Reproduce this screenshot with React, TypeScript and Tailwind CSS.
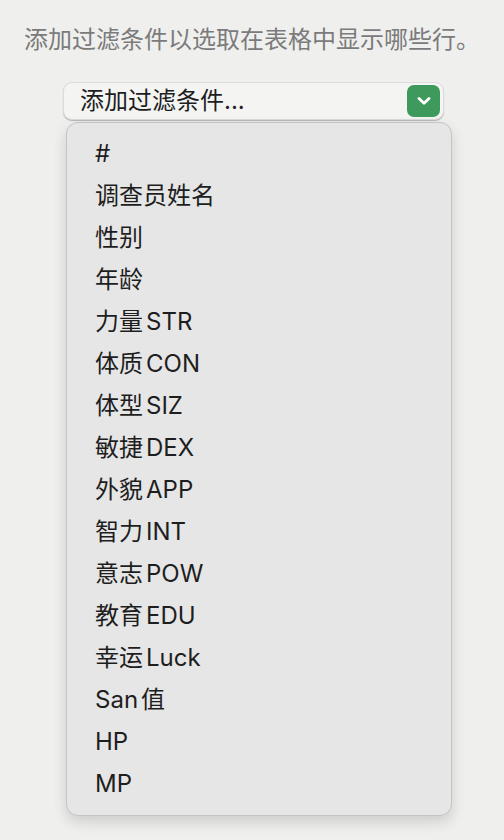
const FIELDS = [
  ['#'],
  ['调查员姓名'],
  ['性别'],
  ['年龄'],
  ['力量', 'STR'],
  ['体质', 'CON'],
  ['体型', 'SIZ'],
  ['敏捷', 'DEX'],
  ['外貌', 'APP'],
  ['智力', 'INT'],
  ['意志', 'POW'],
  ['教育', 'EDU'],
  ['幸运', 'Luck'],
  ['San', '值'],
  ['HP'],
  ['MP'],
];

function Chevron() {
  return (
    <svg width="16" height="12" viewBox="0 0 16 12" fill="none">
      <path d="M3 3.5 L8 8.3 L13 3.5" stroke="white" strokeWidth="2.8" strokeLinecap="round" strokeLinejoin="round" />
    </svg>
  );
}

export default function App() {
  return (
    <div
      className="min-h-screen w-[504px] bg-[#efefee] pt-6"
      style={{ fontFamily: 'Inter, "Noto Sans CJK SC", sans-serif' }}
    >
      <p className="text-center text-[24px] leading-8 text-[#7b7b7b]">添加过滤条件以选取在表格中显示哪些行。</p>

      <div className="mt-[26px] ml-[63px] flex h-[38px] w-[381px] items-center justify-between rounded-[9px] border border-[#dcdcdc] bg-[#f4f4f3] pl-[16px] pr-[3px] shadow-[0_1px_1px_rgba(0,0,0,0.25)]">
        <span className="text-[24px] text-[#1e1e1e]">添加过滤条件...</span>
        <div className="flex h-[32px] w-[33px] items-center justify-center rounded-[7px] bg-[#3e995c]">
          <Chevron />
        </div>
      </div>

      <div className="mt-[2px] ml-[66px] w-[386px] rounded-[12px] border border-[#c4c4c4] bg-[#e6e6e6] py-[10px] shadow-[0_6px_14px_rgba(0,0,0,0.14)]">
        {FIELDS.map(parts => (
          <div key={parts.join('')} className="flex h-[42px] items-center gap-[3px] pl-[28px] text-[24px] text-[#1e1e1e]">
            {parts.map(p => (
              <span key={p}>{p}</span>
            ))}
          </div>
        ))}
      </div>
    </div>
  );
}
